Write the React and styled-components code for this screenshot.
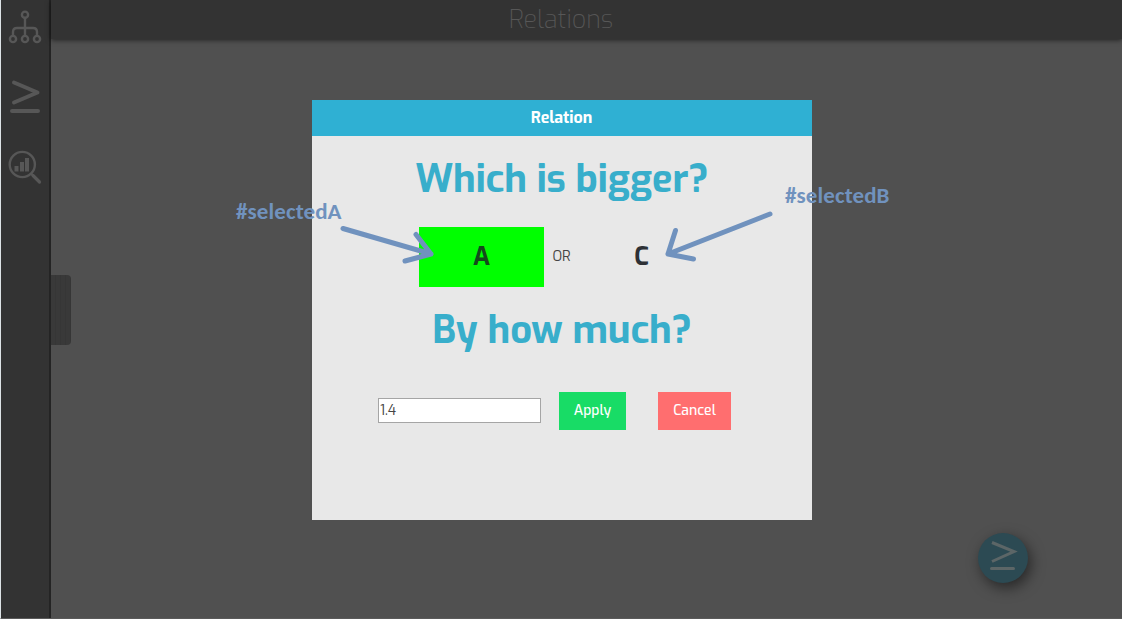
import React from 'react';
import styled, { createGlobalStyle } from 'styled-components';

const fontStack = 'Exo, "Exo 2", Roboto, "Liberation Sans", sans-serif';

const GlobalStyle = createGlobalStyle`
  * { box-sizing: border-box; }
  body { margin: 0; overflow: hidden; font-family: ${fontStack}; }
`;

const Page = styled.div`
  position: relative;
  display: flex;
  width: 1122px;
  height: 619px;
  background: #505050;
  border-left: 1px solid #dde3e6;
  border-bottom: 1px solid #5a5a5a;
`;

const Sidebar = styled.nav`
  display: flex;
  flex: none;
  flex-direction: column;
  align-items: center;
  width: 50px;
  padding-top: 9px;
  background: #333;
  border-right: 2px solid #242424;
`;

const NavIcon = styled.svg`
  flex: none;
  width: 36px;
  height: 36px;
  margin-bottom: 34px;
  fill: none;
  stroke: #575757;
  stroke-linecap: round;
  stroke-linejoin: round;
`;

const Main = styled.main`
  display: flex;
  flex: 1;
  flex-direction: column;
  align-items: flex-start;
`;

const TopBar = styled.header`
  width: 100%;
  height: 39px;
  background: #333;
  box-shadow: 0 1px 5px rgba(0, 0, 0, 0.6);
  color: #575757;
  font-size: 25px;
  font-weight: 200;
  line-height: 40px;
  text-align: center;
  padding-right: 51px;
`;

const DrawerHandle = styled.div`
  width: 20px;
  height: 70px;
  margin-top: 236px;
  border-radius: 0 4px 4px 0;
  background: repeating-linear-gradient(90deg, #393939 0 4px, #363636 4px 5px);
`;

const FloatingButton = styled.button`
  position: absolute;
  right: 94px;
  bottom: 35px;
  width: 50px;
  height: 50px;
  padding: 0;
  border: 0;
  border-radius: 50%;
  background: #2c4a53;
  box-shadow: 3px 5px 14px rgba(0, 0, 0, 0.5);
`;

const FloatingIcon = styled.svg`
  display: block;
  width: 50px;
  height: 50px;
  fill: none;
  stroke: #5c6667;
  stroke-width: 3;
`;

const Dialog = styled.section`
  position: absolute;
  top: 100px;
  left: 311px;
  display: flex;
  flex-direction: column;
  align-items: center;
  width: 500px;
  height: 420px;
  background: #e8e8e8;
`;

const DialogTitle = styled.h1`
  width: 100%;
  height: 36px;
  margin: 0;
  padding-right: 1px;
  background: #2fb0d3;
  color: #fff;
  font-size: 16px;
  font-weight: 700;
  line-height: 35px;
  text-align: center;
`;

const Question = styled.h2`
  margin: 18px 0 0;
  height: 48px;
  color: #38aecb;
  font-size: 38px;
  font-weight: 700;
  line-height: 50px;
  white-space: nowrap;
`;

const Choices = styled.div`
  display: flex;
  width: 286px;
  margin-top: 25px;
  height: 60px;
  line-height: 60px;
`;

const Choice = styled.div`
  width: 125px;
  background: ${(p) => (p.$selected ? '#00ff00' : 'transparent')};
  color: ${(p) => (p.$selected ? '#15491c' : '#2e3136')};
  font-size: 25px;
  font-weight: 700;
  text-align: center;
`;

const Or = styled.span`
  width: 35px;
  color: #444;
  font-size: 14px;
  font-weight: 400;
  text-align: center;
`;

const Controls = styled.form`
  display: flex;
  align-items: center;
  width: 500px;
  height: 38px;
  margin-top: 39px;
  padding-left: 66px;
`;

const Amount = styled.input`
  width: 163px;
  height: 25px;
  margin-bottom: 2px;
  padding: 0 1px;
  border: 1px solid #a5a5a5;
  background: #fff;
  color: #444;
  font: 400 14px ${fontStack};
  outline: 0;
`;

const Action = styled.button`
  width: ${(p) => p.$width};
  height: 38px;
  margin-left: ${(p) => p.$gap};
  padding: 0 0 1px;
  border: 0;
  background: ${(p) => p.$color};
  color: #fff;
  font: 500 14px ${fontStack};
`;

const Annotation = styled.span`
  position: absolute;
  top: ${(p) => p.$top};
  left: ${(p) => p.$left};
  color: #7092be;
  font: 700 23px/24px Carlito, Lato, sans-serif;
  letter-spacing: 0.1px;
  white-space: nowrap;
`;

const Arrows = styled.svg`
  position: absolute;
  top: 0;
  left: -1px;
  pointer-events: none;
  fill: none;
  stroke: #7092be;
  stroke-width: 5;
  stroke-linecap: round;
  stroke-linejoin: round;
`;

export default function App() {
  return (
    <Page>
      <GlobalStyle />
      <Sidebar>
        <NavIcon viewBox="0 0 36 36" strokeWidth="2.4">
          <circle cx="18" cy="5.7" r="3.1" />
          <path d="M18 9v17M6 26v-3q0-4 4-4h16q4 0 4 4v3" />
          <circle cx="6" cy="30" r="3.1" />
          <circle cx="18" cy="30" r="3.1" />
          <circle cx="30" cy="30" r="3.1" />
        </NavIcon>
        <NavIcon viewBox="0 0 36 36" strokeWidth="4">
          <path d="M7 3.5 30.5 13.5 7 23.5M5 32h26" />
        </NavIcon>
        <NavIcon viewBox="0 0 36 36" strokeWidth="2.4">
          <circle cx="15.3" cy="15.5" r="12.6" />
          <path d="M24.5 25l2 2" />
          <path d="M26 26.5 32.5 33" strokeWidth="3.2" />
          <path d="M7.5 17h4v5.5h-4zM13 13h4v9.5h-4zM18 9h4v13.5h-4z" fill="#575757" stroke="none" />
        </NavIcon>
      </Sidebar>
      <Main>
        <TopBar>Relations</TopBar>
        <DrawerHandle />
      </Main>
      <FloatingButton aria-label="Add relation">
        <FloatingIcon viewBox="0 0 50 50">
          <path d="M14 9.5 36 18.5 14 28.5" />
          <path d="M13.5 35.5h22" strokeLinecap="round" />
        </FloatingIcon>
      </FloatingButton>
      <Dialog>
        <DialogTitle>Relation</DialogTitle>
        <Question>Which is bigger?</Question>
        <Choices>
          <Choice $selected>A</Choice>
          <Or>OR</Or>
          <Choice>C</Choice>
        </Choices>
        <Question>By how much?</Question>
        <Controls>
          <Amount defaultValue="1.4" />
          <Action type="button" $width="67px" $gap="18px" $color="#18dc66">Apply</Action>
          <Action type="button" $width="73px" $gap="32px" $color="#ff6e6f">Cancel</Action>
        </Controls>
      </Dialog>
      <Annotation $top="199px" $left="235px">#selectedA</Annotation>
      <Annotation $top="183px" $left="784px">#selectedB</Annotation>
      <Arrows width="1122" height="619">
        <path d="M343 228.5 431 254M416 234.5 431 254 405 261" />
        <path d="M770 214 668 254M675.5 230.5 668 254 693.5 259" />
      </Arrows>
    </Page>
  );
}
